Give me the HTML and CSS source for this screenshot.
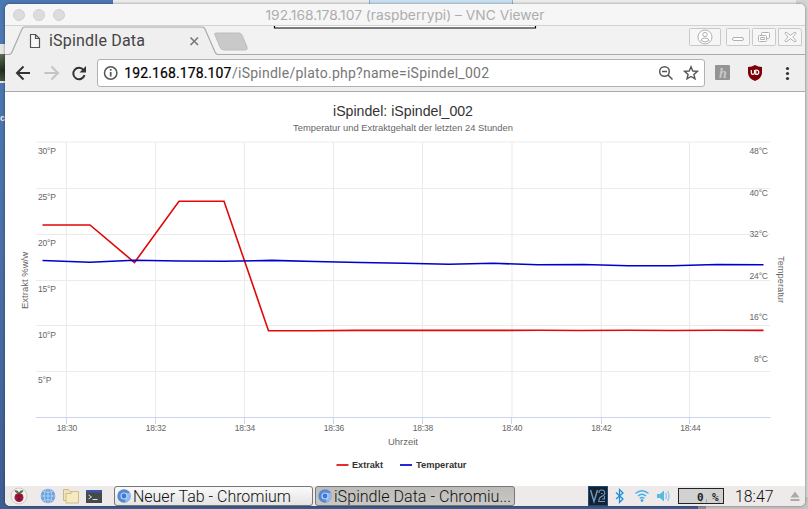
FILE: index.html
```html
<!DOCTYPE html>
<html lang="de">
<head>
<meta charset="utf-8">
<title>iSpindle Data</title>
<link rel="stylesheet" href="styles.css">
</head>
<body>
<div class="desktop">
  <div class="back back-top"></div>
  <div class="back back-sheet"></div>
  <div class="back back-side"></div>
  <div class="back back-thumb"></div>
  <div class="back back-label">c</div>
  <div class="back back-bottom"></div>
  <main class="window">
    <header class="titlebar">
      <div class="lights"><i></i><i></i><i></i></div>
      <svg class="title" width="290" height="22"><text x="10.500" y="15.500" textLength="279" lengthAdjust="spacingAndGlyphs">192.168.178.107 (raspberrypi) – VNC Viewer</text></svg>
    </header>
    <div class="tabstrip">
      <svg class="tabshape" width="800" height="29" viewBox="5 26 800 29">
        <path d="M5 54.500H9Q11 54.500 12 52L22 29Q23 27 25 27H202Q204 27 205 29L215 52Q216 54.500 218 54.500H805V56H5Z" fill="#efefef" stroke="#aaa" stroke-width="1.200"/>
        <path d="M216 33h23q2 0 3 2l5 12q1 3-2 3h-21q-3 0-4-3l-5-12q-1-2 1-2z" fill="#c9c9c9" stroke="#bdbdbd"/>
        <path d="M30.500 34.500h5l4 4v9h-9zM35.500 34.500v4h4" fill="#f8f8f8" stroke="#555" stroke-width="1.200"/>
        <text x="49" y="46.200" textLength="96" class="tabtext">iSpindle Data</text>
        <path d="M190.500 37.500l7.500 7.500m0-7.500l-7.500 7.500" stroke="#777" stroke-width="1.600"/>
        <path d="M274.500 26v2h261V26" fill="#fff" stroke="#000" stroke-width="1.200"/>
        <g fill="#f6f6f6" stroke="#c9c9c9">
          <rect x="689.500" y="28.500" width="31" height="17" rx="1"/>
          <rect x="726.500" y="28.500" width="23" height="17" rx="1"/>
          <rect x="752.500" y="28.500" width="23" height="17" rx="1"/>
          <path d="M778.500 28.500h20q3 0 3 3v14h-23z"/>
        </g>
        <g fill="#fff" stroke="#b0b0b0">
          <circle cx="705" cy="37" r="7"/>
          <circle cx="705" cy="34.500" r="2.200"/>
          <path d="M701 40.500q0-2.500 4-2.500t4 2.500q-4 3-8 0z"/>
          <rect x="732.500" y="37.500" width="11" height="3" rx="1.500"/>
          <rect x="761.500" y="32.500" width="8" height="6" rx="1"/>
          <rect x="758.500" y="35.500" width="8" height="6" rx="1"/>
          <rect x="760.800" y="37.500" width="3.500" height="2"/>
          <path d="M786 32l4.500 3.300L795 32l1.200 1.200-3.400 3.800 3.400 3.800L795 42l-4.500-3.300L786 42l-1.200-1.200 3.400-3.800-3.400-3.800z"/>
        </g>
      </svg>
    </div>
    <div class="toolbar">
      <svg class="nav" width="92" height="36" viewBox="5 55 92 36" fill="none" stroke-width="2">
        <path d="M30 73H17.500M23.500 66.500L17 73l6.500 6.500" stroke="#333"/>
        <path d="M44.500 73H57M51.500 66.500L58 73l-6.500 6.500" stroke="#c4c4c4"/>
        <path d="M83.500 70A5.700 5.700 0 1 0 84.500 75" stroke="#333"/>
        <path d="M86 66v6.500h-6.500z" fill="#333"/>
      </svg>
      <div class="omnibox">
        <svg width="606" height="26" viewBox="98 60 606 26">
          <g fill="none" stroke="#555" stroke-width="1.500">
            <circle cx="110.700" cy="73" r="6.200"/>
            <path d="M110.700 72v4.500M110.700 69v1.700" stroke-width="1.700"/>
            <circle cx="664.500" cy="71.500" r="4.800"/>
            <path d="M662 71.500h5M668 75l4.500 4.500"/>
            <path d="M691 66.800l1.800 4.200 4.600.4-3.500 3 1.100 4.500-4-2.400-4 2.400 1.100-4.500-3.500-3 4.600-.4z" stroke-width="1.400"/>
          </g>
          <text x="124.300" y="77.800" class="url host" textLength="107">192.168.178.107</text>
          <text x="232" y="77.800" class="url path" textLength="257">/iSpindle/plato.php?name=iSpindel_002</text>
        </svg>
      </div>
      <svg class="exts" width="100" height="36" viewBox="705 55 100 36">
        <rect x="715" y="65" width="15" height="15" rx="1" fill="#949494"/>
        <text x="719" y="78" class="hicon">h</text>
        <path d="M755 65q3 2 7 2v6q0 5-7 8-7-3-7-8v-6q4 0 7-2z" fill="#7d0009"/>
        <path d="M751.300 70v2.700q0 1.700 1.600 1.700t1.600-1.700V70M755.800 70v4.400h.6q2.400 0 2.400-2.200T756.400 70z" fill="none" stroke="#fff" stroke-width="1.200"/>
        <g fill="#333"><circle cx="787.500" cy="68.500" r="1.600"/><circle cx="787.500" cy="73.500" r="1.600"/><circle cx="787.500" cy="78.500" r="1.600"/></g>
      </svg>
    </div>
    <section class="page">
      <svg width="800" height="394" viewBox="5 92 800 394">
        <text x="333" y="115.700" class="ctitle" textLength="140" lengthAdjust="spacingAndGlyphs">iSpindel: iSpindel_002</text>
        <text x="293" y="131" class="label" textLength="220" lengthAdjust="spacingAndGlyphs">Temperatur und Extraktgehalt der letzten 24 Stunden</text>
        <path d="M36 142H770M36 188.500H770M36 234.500H770M36 280.500H770M36 325.500H770M36 371.500H770M66.300 142V417M155.500 142V417M244.500 142V417M333.500 142V417M422.500 142V417M512 142V417M601.200 142V417M689.500 142V417" stroke="#ebebeb" stroke-width="1.100" fill="none"/>
        <path d="M36 417.500H770.500M66.500 417V424M155.500 417V424M244.500 417V424M333.500 417V424M422.500 417V424M511.500 417V424M601.500 417V424M689.500 417V424" stroke="#ccd6eb" fill="none"/>
        <g class="tick">
          <text x="38" y="154" textLength="18">30°P</text><text x="38" y="200" textLength="18">25°P</text><text x="38" y="246" textLength="18">20°P</text><text x="38" y="292" textLength="18">15°P</text><text x="38" y="338" textLength="18">10°P</text><text x="38" y="383" textLength="13.500">5°P</text>
          <text x="749.500" y="154" textLength="18.500">48°C</text><text x="749.500" y="196" textLength="18.500">40°C</text><text x="749.500" y="237" textLength="18.500">32°C</text><text x="749.500" y="279" textLength="18.500">24°C</text><text x="749.500" y="320" textLength="18.500">16°C</text><text x="754" y="362" textLength="14">8°C</text>
        </g>
        <g class="tick mid">
          <text x="67" y="431" textLength="20.500">18:30</text><text x="156" y="431" textLength="20.500">18:32</text><text x="245" y="431" textLength="20.500">18:34</text><text x="334" y="431" textLength="20.500">18:36</text><text x="423" y="431" textLength="20.500">18:38</text><text x="512.300" y="431" textLength="20.500">18:40</text><text x="601.500" y="431" textLength="20.500">18:42</text><text x="690.500" y="431" textLength="20.500">18:44</text>
        </g>
        <text x="388" y="445" class="label" textLength="30" lengthAdjust="spacingAndGlyphs">Uhrzeit</text>
        <text transform="translate(28 309) rotate(-90)" class="label" textLength="57" lengthAdjust="spacingAndGlyphs">Extrakt %w/w</text>
        <text transform="translate(778 256) rotate(90)" class="label" textLength="47" lengthAdjust="spacingAndGlyphs">Temperatur</text>
        <path d="M42.500 225H90L134.500 262.500 179 201.200H224L268.500 330.700H312L356 330.400H500L540 330.200 580 330.500 628 330.200 672 330.500 716 330.200 763.500 330.400" fill="none" stroke="#e00808" stroke-width="1.600"/>
        <path d="M42.500 260.500L90 262.200 134 260.200 179 261 224 261.300 272 260.400 315 261.500 360 262.500 404 263.200 449 264.200 493 263.300 538 264.700 584 264.500 628 265.700H672L717 264.500 763.500 264.800" fill="none" stroke="#0000cc" stroke-width="1.600"/>
        <path d="M336.500 465H348.500" stroke="#e00808" stroke-width="1.700"/>
        <path d="M400 465H412" stroke="#0000cc" stroke-width="1.700"/>
        <text x="352" y="468" class="legend" textLength="31" lengthAdjust="spacingAndGlyphs">Extrakt</text>
        <text x="416" y="468" class="legend" textLength="50.500" lengthAdjust="spacingAndGlyphs">Temperatur</text>
      </svg>
    </section>
    <footer class="taskbar">
      <svg class="launch" width="109" height="20" viewBox="5 486 109 20">
        <circle cx="19" cy="496" r="8" fill="#f1f1ee" stroke="#ccc"/>
        <path d="M14.500 490.500q3-1 4.500 2 1.500-3 4.500-2-1 3-4.500 3t-4.500-3z" fill="#4d7a3a"/>
        <circle cx="19" cy="497.500" r="4.500" fill="#a3173e"/>
        <path d="M16 496h6M17 499h4M19 494v7" stroke="#651329" stroke-width=".8"/>
        <circle cx="48" cy="496" r="7.300" fill="#6da2df"/>
        <path d="M41 496H55M48 489V503M43 491.500q5 2 10 0M43 500.500q5-2 10 0M46 489q-4 7 0 14M50 489q4 7 0 14" fill="none" stroke="#b9d5f2" stroke-width=".8"/>
        <path d="M63.500 500.500v-11h5l1.500 2h6.500v9z" fill="#f1e5b5" stroke="#cbb981"/>
        <path d="M66 503v-9.500h5l1.500-2h6V503z" fill="#f5eac0" stroke="#cdbd87"/>
        <rect x="86" y="490" width="16" height="13" fill="#46494b"/><rect x="86" y="490" width="16" height="2.500" fill="#3d55a7"/>
        <path d="M88.500 495l3 2-3 2M92.500 499.500h5" fill="none" stroke="#eee" stroke-width=".9"/>
      </svg>
      <div class="task"><svg width="197" height="18" viewBox="115 487 197 18">
        <circle cx="124" cy="496" r="6.700" fill="#5789d3"/><path d="M124 493h6.500a7 7 0 0 1-5 9.500z" fill="#91b9ed"/><circle cx="124" cy="496" r="3.500" fill="#b9d3f4"/><circle cx="124" cy="496" r="2.400" fill="#3f7ad2"/>
        <text x="133" y="501.800" textLength="158" lengthAdjust="spacingAndGlyphs">Neuer Tab - Chromium</text>
      </svg></div>
      <div class="task active"><svg width="198" height="18" viewBox="316 487 198 18">
        <circle cx="325" cy="496" r="6.700" fill="#5789d3"/><path d="M325 493h6.500a7 7 0 0 1-5 9.500z" fill="#91b9ed"/><circle cx="325" cy="496" r="3.500" fill="#b9d3f4"/><circle cx="325" cy="496" r="2.400" fill="#3f7ad2"/>
        <text x="334" y="501.800" textLength="177" lengthAdjust="spacingAndGlyphs">iSpindle Data - Chromiu...</text>
      </svg></div>
      <svg class="tray" width="217" height="20" viewBox="588 486 217 20">
        <rect x="588.500" y="486.500" width="19" height="19" fill="#17212c" stroke="#164b7d"/>
        <path d="M590.500 490l3.500 11.500 3.500-11.500" fill="none" stroke="#6c9cc2" stroke-width="1.400"/>
        <path d="M598.800 493q0-3 3-3t3 3q0 2.200-2.800 3.200-3.200 1.200-3.200 5.300h6.200M601 493.500h1.500M602 499h2.500v-3" fill="none" stroke="#6c9cc2" stroke-width="1.100"/>
        <path d="M616 492.500l7 6.500-3.500 3.500V489.500l3.500 3.500-7 6" fill="none" stroke="#1d91dc" stroke-width="1.300"/>
        <g fill="none" stroke="#42b2ee" stroke-width="1.300"><path d="M635.500 493.500q6.500-5.500 13 0M638 496q4-3.500 8 0M639.700 498.500q2.300-2 4.600 0"/></g><circle cx="642" cy="500.500" r="1.300" fill="#269fe3"/>
        <path d="M657 494h3l4-3.500v11l-4-3.500h-3z" fill="#59b9e5"/>
        <path d="M665.500 493q2 3 0 6M667.500 491q3 5 0 10" fill="none" stroke="#8accea" stroke-width="1.300"/>
        <rect x="678.500" y="488.500" width="45" height="15" fill="#d1d1d1" stroke="#222"/>
        <path d="M701 503v-2M706.500 503v-4M719 503v-2" stroke="#aaa"/>
        <text x="697" y="500.800" class="cpu" textLength="21.500">0 %</text>
        <text x="735" y="501.800" class="clock" textLength="38.500" lengthAdjust="spacingAndGlyphs">18:47</text>
        <path d="M795 491.500l4.500 6h-9zM790.500 499h9v2h-9z" fill="#aaa"/>
      </svg>
    </footer>
  </main>
</div>
</body>
</html>
```
FILE: styles.css
```css
* { box-sizing: border-box; }
body { margin: 0; font-family: Roboto, sans-serif; }
svg { display: block; flex: none; }
.desktop {
  position: relative;
  width: 808px;
  height: 509px;
  padding: 4px 3px 3px 5px;
  overflow: hidden;
  background: linear-gradient(#4c78b3, #4a70a6 50%, #3d5d92);
}
.back { position: absolute; }
.back-top { left: 113px; right: 0; top: 0; height: 12px; background: #ebebeb; }
.back-sheet { left: 369px; top: 0; width: 144px; height: 6px; background: #c9dff0; border: solid #8bb4d2; border-width: 0 1px; }
.back-side { right: 0; top: 0; width: 12px; height: 509px; background: #d4d4d4; }
.back-thumb { left: 0; top: 44px; width: 6px; height: 39px; background: linear-gradient(#5d6b55, #1f2f22 60%, #46533d); border: solid #e5e5e5; border-width: 10px 1px 2px 0; }
.back-label { left: 0; top: 113px; font: bold 9px "Liberation Sans", sans-serif; color: #eee; }
.back-bottom { left: 698px; right: 0; bottom: 0; height: 12px; background: #c5c5c5; border-left: 8px solid #8e949c; }
.window {
  position: relative;
  width: 800px;
  height: 502px;
  display: flex;
  flex-direction: column;
  border-radius: 5px;
  overflow: hidden;
  background: #fff;
  box-shadow: 0 0 3px rgba(0, 0, 0, .45);
}
.titlebar { display: flex; height: 22px; background: #f6f6f6; border-bottom: 1px solid #d2d2d2; }
.lights { display: flex; gap: 8px; padding: 5px 0 0 8px; width: 250px; }
.lights i { width: 12px; height: 12px; border-radius: 50%; background: #dcdcdc; border: 1px solid #cfcfcf; }
.title { font: 13px Inter, sans-serif; fill: #adadad; }
.tabstrip { height: 29px; background: #f2f2f2; }
.tabtext { font-size: 16px; fill: #444; }
.toolbar { display: flex; height: 37px; background: #efefef; border-bottom: 1px solid #aaa; }
.omnibox { width: 608px; height: 28px; margin-top: 4px; background: #fff; border: 1px solid #b2b2b2; border-radius: 3px; }
.url { font-size: 14px; }
.host { fill: #000; stroke: #000; stroke-width: .2px; }
.path { fill: #777; }
.hicon { font: italic bold 14px "Liberation Serif", serif; fill: #c9c9c9; }
.page { height: 394px; background: #fff; font-family: "Liberation Sans", sans-serif; }
.ctitle { font-size: 14px; fill: #333; }
.label { font-size: 9.300px; fill: #666; }
.tick { font-size: 8.500px; fill: #666; }
.mid { text-anchor: middle; }
.legend { font-size: 9.300px; font-weight: bold; fill: #333; }
.taskbar { display: flex; height: 20px; background: #edeae9; }
.task { width: 199px; height: 20px; margin-right: 2px; border: 1px solid #777; border-radius: 3px; background: linear-gradient(#fafafa, #e4e4e4); font-size: 16.500px; font-weight: 300; fill: #111; }
.task.active { width: 200px; margin-right: 73px; background: linear-gradient(#bdbcb9, #c9c8c5); }
.cpu { font: bold 11px "DejaVu Sans Mono", monospace; fill: #222; }
.clock { font-size: 16.500px; font-weight: 300; fill: #111; }
```
